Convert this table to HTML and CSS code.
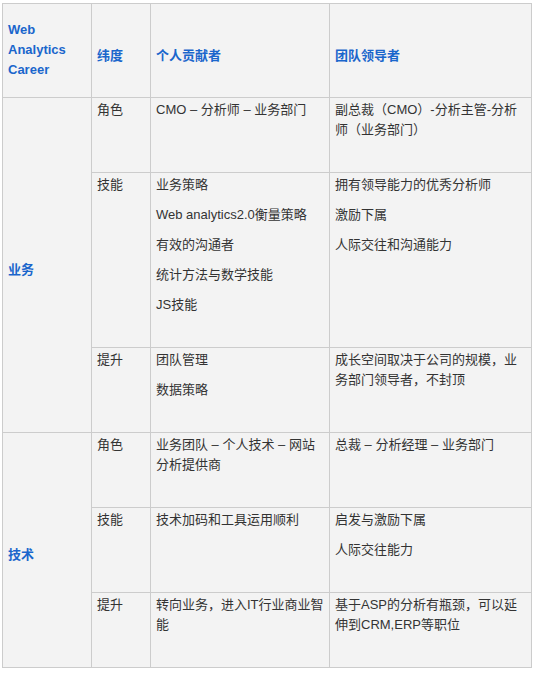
FILE: index.html
```html
<!DOCTYPE html>
<html lang="zh-CN">
<head>
<meta charset="utf-8">
<title>Web Analytics Career</title>
<link rel="stylesheet" href="styles.css">
</head>
<body>
<table class="career">
  <colgroup>
    <col class="c1"><col class="c2"><col class="c3"><col class="c4">
  </colgroup>
  <thead>
    <tr>
      <th class="title">Web<br>Analytics<br>Career</th>
      <th class="head">纬度</th>
      <th class="head">个人贡献者</th>
      <th class="head">团队领导者</th>
    </tr>
  </thead>
  <tbody>
    <tr>
      <th class="group" rowspan="3">业务</th>
      <td><p>角色</p></td>
      <td><p>CMO – 分析师 – 业务部门</p></td>
      <td><p>副总裁（CMO）-分析主管-分析师（业务部门）</p></td>
    </tr>
    <tr>
      <td><p>技能</p></td>
      <td>
        <p>业务策略</p>
        <p>Web analytics2.0衡量策略</p>
        <p>有效的沟通者</p>
        <p>统计方法与数学技能</p>
        <p>JS技能</p>
      </td>
      <td>
        <p>拥有领导能力的优秀分析师</p>
        <p>激励下属</p>
        <p>人际交往和沟通能力</p>
      </td>
    </tr>
    <tr>
      <td><p>提升</p></td>
      <td>
        <p>团队管理</p>
        <p>数据策略</p>
      </td>
      <td><p>成长空间取决于公司的规模，业务部门领导者，不封顶</p></td>
    </tr>
    <tr>
      <th class="group" rowspan="3">技术</th>
      <td><p>角色</p></td>
      <td><p>业务团队 – 个人技术 – 网站分析提供商</p></td>
      <td><p>总裁 – 分析经理 – 业务部门</p></td>
    </tr>
    <tr>
      <td><p>技能</p></td>
      <td><p>技术加码和工具运用顺利</p></td>
      <td>
        <p>启发与激励下属</p>
        <p>人际交往能力</p>
      </td>
    </tr>
    <tr>
      <td><p>提升</p></td>
      <td><p>转向业务，进入IT行业商业智能</p></td>
      <td><p>基于ASP的分析有瓶颈，可以延伸到CRM,ERP等职位</p></td>
    </tr>
  </tbody>
</table>
</body>
</html>
```

FILE: styles.css
```css
html, body {
  margin: 0;
  padding: 0;
  background: #ffffff;
}

body {
  font-family: "Liberation Sans", "Noto Sans CJK SC", sans-serif;
  font-size: 13px;
  line-height: 20px;
  color: #333333;
}

.career {
  margin: 3px 0 0 2px;
  width: 530px;
  table-layout: fixed;
  border-collapse: collapse;
  background: #f3f3f3;
}

.c1 { width: 89px; }
.c2 { width: 59px; }
.c3 { width: 179px; }
.c4 { width: 202px; }

.career th,
.career td {
  border: 1px solid #cccccc;
  text-align: left;
}

.career td {
  vertical-align: top;
  padding: 2px 4px 32px 5px;
}

.career p {
  margin: 0 0 10px;
}

.career p:last-child {
  margin-bottom: 0;
}

.career th {
  color: #1a66cc;
  font-weight: 700;
  vertical-align: middle;
}

.career .title {
  padding: 16px 4px 17px 5px;
}

.career .head,
.career .group {
  padding: 10px 4px 0 5px;
}
```
